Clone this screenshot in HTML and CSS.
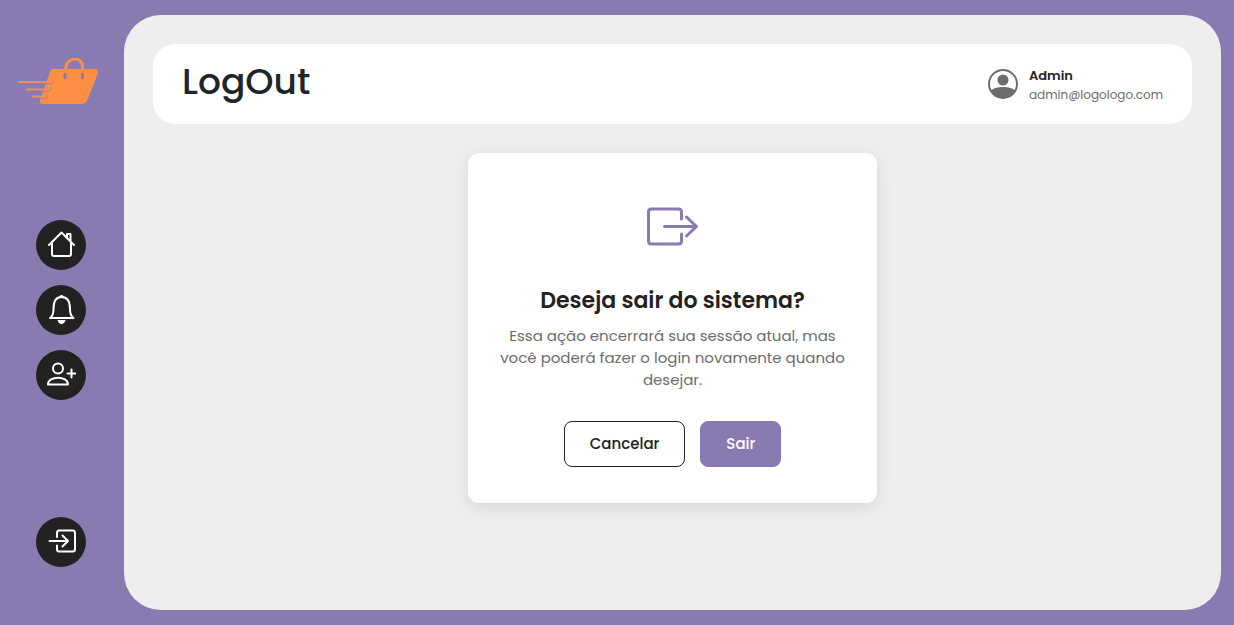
FILE: index.html
```
<!DOCTYPE html>
<html lang="pt-BR">
<head>
<meta charset="utf-8">
<meta name="viewport" content="width=device-width, initial-scale=1">
<title>LogOut</title>
<link rel="stylesheet" href="styles.css">
</head>
<body>
<div class="app">
  <aside class="sidebar">
    <a class="logo" href="#" aria-label="Página inicial">
      <svg width="86" height="48" viewBox="0 0 86 48" aria-hidden="true">
        <path class="logo-handle" d="M47.500 12C48 -2 64.500 -2 64.500 9V12"/>
        <path class="logo-bag" fill-rule="evenodd" d="M35 11H76Q81 11 80 15L69 43Q67 46 64 46H25Q21 46 22 42L32 14Q33 11 35 11ZM47 14.500q-1.500 0-1.500 2v3q0 2 1.500 2t1.500-2v-3q0-2-1.500-2ZM64.500 14.500q-1.500 0-1.500 2v3q0 2 1.500 2t1.500-2v-3q0-2-1.500-2Z"/>
        <path class="logo-shade" d="M25 26H34.500L36 22.500M25 33.500H31.500L33 29.500M24 40.500H28.500L30 37"/>
        <path class="logo-speed" d="M0 24H35M8 31.500H32M14 38.500H29"/>
      </svg>
    </a>
    <nav class="menu" aria-label="Menu principal">
      <a class="menu-item" href="#" aria-label="Início">
        <svg class="icon" viewBox="0 0 30 30" aria-hidden="true"><path d="M3 15 15.500 2.500 28 15M6 13V24Q6 26 8 26H23Q25 26 25 24V13M21 7.500V4H24.500V11"/></svg>
      </a>
      <a class="menu-item" href="#" aria-label="Notificações">
        <svg class="icon" viewBox="0 0 30 30" aria-hidden="true"><path d="M4 23H27.500C24.500 21 24 18 24 14C24 7 21.500 2 15.500 2S7.500 7 7.500 14C7.500 18 7 21 4 23Z"/><path class="solid" d="M13.500 2.500V1Q15.500-1 17.500 1V2.500ZM11.500 25H19.500Q18.500 29 15.500 29T11.500 25Z"/></svg>
      </a>
      <a class="menu-item" href="#" aria-label="Adicionar usuário">
        <svg class="icon" viewBox="0 0 30 30" aria-hidden="true"><circle cx="12" cy="8.500" r="5"/><path d="M2 24.500C2 15.500 22 15.500 22 24.500ZM21.500 13.500H29.500M25.500 9.500V17.500"/></svg>
      </a>
    </nav>
    <a class="menu-item" href="#" aria-label="Sair">
      <svg class="icon" viewBox="0 0 30 30" aria-hidden="true"><path d="M11 10V6Q11 3.500 13 3.500H27Q29 3.500 29 6V22Q29 24.500 27 24.500H13Q11 24.500 11 22V18.500M3.500 14H22M16.500 8.500 22 14 16.500 19.500"/></svg>
    </a>
  </aside>

  <main class="content">
    <header class="topbar">
      <h1 class="title">LogOut</h1>
      <div class="user">
        <svg class="avatar" viewBox="0 0 30 30" aria-hidden="true"><circle class="avatar-ring" cx="15" cy="15" r="14"/><circle cx="15" cy="11" r="5.500"/><path d="M2.500 22C7 16.500 23 16.500 27.500 22A14.500 14.500 0 0 1 2.500 22Z"/></svg>
        <div class="user-info">
          <strong class="user-name">Admin</strong>
          <span class="user-email">admin@logologo.com</span>
        </div>
      </div>
    </header>

    <section class="card" aria-labelledby="question">
      <svg class="card-icon" viewBox="0 0 52 40" aria-hidden="true"><path d="M34.500 12V5Q34.500 2 31.500 2H4.500Q1.500 2 1.500 5V34Q1.500 37 4.500 37H31.500Q34.500 37 34.500 34V27M17.500 19.500H49.500M39.500 10 49.500 19.500 39.500 29"/></svg>
      <h2 class="question" id="question">Deseja sair do sistema?</h2>
      <p class="message">Essa ação encerrará sua sessão atual, mas você poderá fazer o login novamente quando desejar.</p>
      <div class="actions">
        <button class="btn btn-cancel" type="button">Cancelar</button>
        <button class="btn btn-leave" type="button">Sair</button>
      </div>
    </section>
  </main>
</div>
</body>
</html>
```
FILE: styles.css
```
* { box-sizing: border-box; }

body {
  margin: 0;
  background: #897bb1;
  color: #212529;
  font-family: Poppins, Inter, sans-serif;
}

.app {
  display: flex;
  min-height: 100vh;
  padding: 15px 13px 15px 0;
}

.sidebar {
  display: flex;
  flex-direction: column;
  align-items: center;
  flex: 0 0 124px;
  padding: 43px 2px 43px 0;
}

.logo { line-height: 0; }
.logo-bag { fill: #fd8f45; }
.logo-handle { fill: none; stroke: #fd8f45; stroke-width: 3; }
.logo-shade { fill: none; stroke: #b97f79; stroke-width: 1; }
.logo-speed { fill: none; stroke: #ef8e5b; stroke-width: 2; }

.menu {
  display: flex;
  flex-direction: column;
  gap: 15px;
  margin: auto 0;
  padding-bottom: 3px;
}

.menu-item {
  display: grid;
  place-items: center;
  width: 50px;
  height: 50px;
  border-radius: 50%;
  background: #222;
  color: #fff;
}

.icon {
  width: 30px;
  height: 30px;
  fill: none;
  stroke: currentColor;
  stroke-width: 2;
  stroke-linecap: round;
  stroke-linejoin: round;
}
.icon .solid { fill: currentColor; stroke: none; }

.content {
  flex: 1;
  min-width: 0;
  padding: 29px;
  border-radius: 37px;
  background: #eee;
}

.topbar {
  display: flex;
  align-items: center;
  justify-content: space-between;
  min-height: 80px;
  margin-bottom: 29px;
  padding: 8px 29px;
  border-radius: 22px;
  background: #fff;
}

.title {
  margin: 0;
  padding-bottom: 4px;
  font-size: 36px;
  font-weight: 500;
  line-height: 44px;
}

.user { display: flex; align-items: center; gap: 11px; }
.avatar { width: 30px; height: 30px; fill: #6c6c6c; }
.avatar-ring { fill: none; stroke: #6c6c6c; stroke-width: 2; }
.user-info { display: flex; flex-direction: column; padding-top: 2px; line-height: 19px; }
.user-name { font-size: 13px; font-weight: 600; }
.user-email { color: #6c6c6c; font-size: 12px; }

.card {
  max-width: 409px;
  margin: 0 auto;
  padding: 54px 29px 36px;
  border-radius: 11px;
  background: #fff;
  box-shadow: 0 4px 18px rgba(0, 0, 0, .1);
  text-align: center;
}

.card-icon {
  display: block;
  width: 52px;
  height: 40px;
  margin: 0 auto 38px;
  fill: none;
  stroke: #897bb1;
  stroke-width: 3;
  stroke-linecap: round;
  stroke-linejoin: round;
}

.question {
  margin: 0 0 8px;
  color: #222;
  font-size: 22px;
  font-weight: 600;
  line-height: 32px;
}

.message {
  margin: 0 0 30px;
  color: #6c6c6c;
  font-size: 15px;
  line-height: 22px;
}

.actions { display: flex; justify-content: center; gap: 15px; }

.btn {
  padding: 11px 25px;
  border: 1px solid #222;
  border-radius: 8px;
  font-family: inherit;
  font-size: 15px;
  font-weight: 500;
  line-height: 22px;
}
.btn-cancel { background: #fff; color: #222; }
.btn-leave { border-color: #897bb1; background: #897bb1; color: #fff; }
```
